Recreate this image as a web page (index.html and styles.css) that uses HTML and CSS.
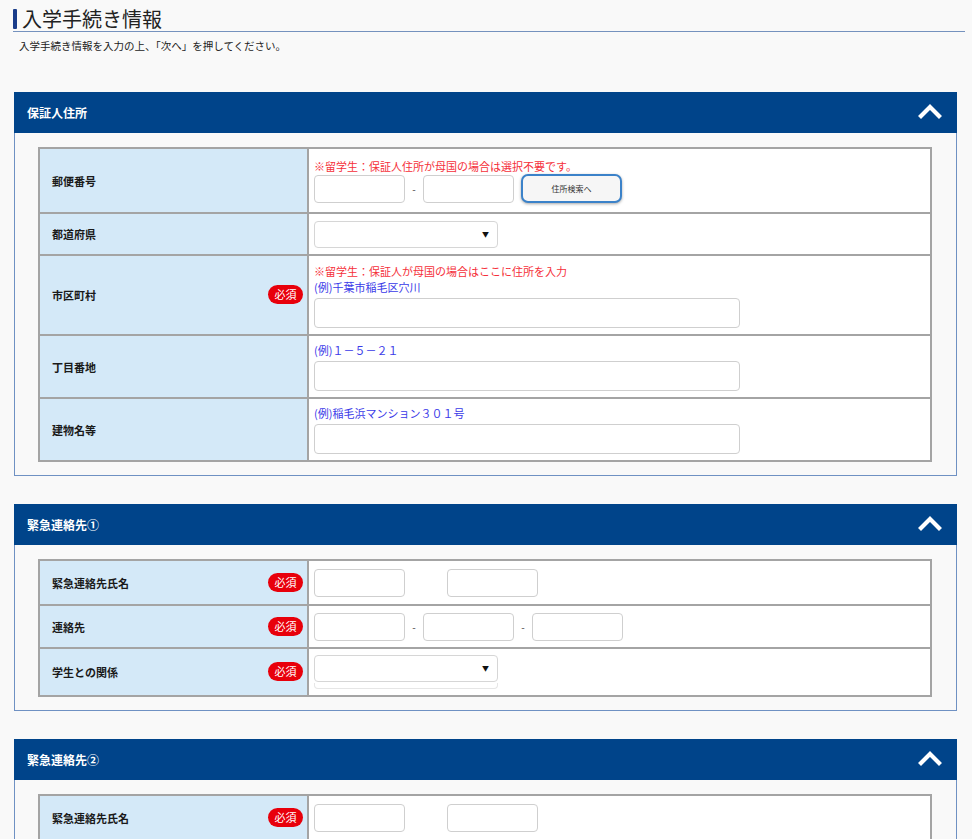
FILE: index.html
```html
<!DOCTYPE html>
<html lang="ja">
<head>
<meta charset="utf-8">
<title>入学手続き情報</title>
<link rel="stylesheet" href="styles.css">
</head>
<body>
<div class="page">
  <h1 class="title"><span class="title-bar"></span>入学手続き情報</h1>
  <p class="lead">入学手続き情報を入力の上、「次へ」を押してください。</p>

  <section class="panel">
    <div class="panel-head">
      <span class="panel-title">保証人住所</span>
      <svg class="chev" width="24" height="16" viewBox="0 0 24 16"><polyline points="3,13 12,4 21,13" fill="none" stroke="#fff" stroke-width="4.2" stroke-linecap="square"/></svg>
    </div>
    <div class="panel-body">
      <table class="form">
        <tr class="h65">
          <th><span class="lbl">郵便番号</span></th>
          <td>
            <div class="note red">※留学生：保証人住所が母国の場合は選択不要です。</div>
            <div class="line">
              <span class="inp w91"></span><span class="dash">-</span><span class="inp w91"></span>
              <span class="btn">住所検索へ</span>
            </div>
          </td>
        </tr>
        <tr class="h42">
          <th><span class="lbl">都道府県</span></th>
          <td><span class="sel"><span class="arrow">▼</span></span></td>
        </tr>
        <tr class="h80">
          <th><span class="lbl">市区町村</span><span class="req">必須</span></th>
          <td>
            <div class="note red">※留学生：保証人が母国の場合はここに住所を入力</div>
            <div class="note blue">(例)千葉市稲毛区穴川</div>
            <span class="inp wide"></span>
          </td>
        </tr>
        <tr class="h63">
          <th><span class="lbl">丁目番地</span></th>
          <td>
            <div class="note blue">(例)１－５－２１</div>
            <span class="inp wide"></span>
          </td>
        </tr>
        <tr class="h63">
          <th><span class="lbl">建物名等</span></th>
          <td>
            <div class="note blue">(例)稲毛浜マンション３０１号</div>
            <span class="inp wide"></span>
          </td>
        </tr>
      </table>
    </div>
  </section>

  <section class="panel">
    <div class="panel-head">
      <span class="panel-title">緊急連絡先①</span>
      <svg class="chev" width="24" height="16" viewBox="0 0 24 16"><polyline points="3,13 12,4 21,13" fill="none" stroke="#fff" stroke-width="4.2" stroke-linecap="square"/></svg>
    </div>
    <div class="panel-body">
      <table class="form">
        <tr class="h45">
          <th><span class="lbl">緊急連絡先氏名</span><span class="req">必須</span></th>
          <td><div class="line"><span class="inp w91 r42"></span><span class="inp w91"></span></div></td>
        </tr>
        <tr class="h43">
          <th><span class="lbl">連絡先</span><span class="req">必須</span></th>
          <td><div class="line"><span class="inp w91"></span><span class="dash">-</span><span class="inp w91"></span><span class="dash">-</span><span class="inp w91"></span></div></td>
        </tr>
        <tr class="h48">
          <th><span class="lbl">学生との関係</span><span class="req">必須</span></th>
          <td class="stack"><span class="sel"><span class="arrow">▼</span></span><span class="ghost"></span></td>
        </tr>
      </table>
    </div>
  </section>

  <section class="panel">
    <div class="panel-head">
      <span class="panel-title">緊急連絡先②</span>
      <svg class="chev" width="24" height="16" viewBox="0 0 24 16"><polyline points="3,13 12,4 21,13" fill="none" stroke="#fff" stroke-width="4.2" stroke-linecap="square"/></svg>
    </div>
    <div class="panel-body">
      <table class="form">
        <tr class="h45">
          <th><span class="lbl">緊急連絡先氏名</span><span class="req">必須</span></th>
          <td><div class="line"><span class="inp w91 r42"></span><span class="inp w91"></span></div></td>
        </tr>
      </table>
    </div>
  </section>
</div>
</body>
</html>
```

FILE: styles.css
```css
* { box-sizing: border-box; }
html, body { margin: 0; padding: 0; }
body {
  background: #f9f9f9;
  font-family: "Noto Sans CJK JP", "Noto Sans", sans-serif;
  color: #222;
  width: 972px;
  height: 839px;
  overflow: hidden;
}
.page { padding: 8px 7px 0 13px; }
.title {
  margin: 0;
  font-size: 20px;
  font-weight: normal;
  line-height: 22px;
  height: 24px;
  color: #222;
  display: flex;
  align-items: center;
  border-bottom: 1.5px solid #7592be;
  padding-bottom: 1px;
}
.title-bar {
  display: inline-block;
  width: 4px;
  height: 20px;
  background: #1a3d8a;
  margin-right: 5px;
  border-radius: 1px;
}
.lead {
  margin: 7px 0 0 6px;
  font-size: 10.5px;
  line-height: 14px;
  color: #222;
}
.panel {
  width: 943px;
  margin: 0 0 28px 1px;
  border: 1px solid #6f91c3;
  background: #f9f9f9;
}
.page .panel:first-of-type { margin-top: 39px; }
.panel-head {
  height: 41px;
  background: #00448a;
  display: flex;
  align-items: center;
  justify-content: space-between;
  padding: 0 15px 0 13px;
  margin: -1px -1px 0 -1px;
}
.panel-title {
  color: #fff;
  font-weight: bold;
  font-size: 12px;
}
.chev { display: block; margin-top: -4px; }
.panel-body { padding: 14px 24px 13px 23px; }
.form {
  width: 894px;
  border-collapse: collapse;
  border: 2px solid #a4a4a4;
}
.form th, .form td {
  border: 2px solid #a4a4a4;
  padding: 0;
}
.form th {
  width: 269px;
  background: #d4e9f8;
  text-align: left;
  font-weight: bold;
  font-size: 11px;
  padding: 0 5px 0 12px;
  vertical-align: middle;
  position: relative;
  color: #1a1a1a;
}
.req {
  position: absolute;
  right: 4px;
  top: 50%;
  margin-top: -10px;
  width: 35px;
  height: 19px;
  border-radius: 10px;
  background: #e8000b;
  color: #fff;
  font-size: 11px;
  font-weight: normal;
  line-height: 19px;
  text-align: center;
}
.form td {
  background: #fff;
  padding: 6px 6px 6px 5px;
  vertical-align: middle;
}
.h65 { height: 65px; }
.h42 { height: 42px; }
.h80 { height: 80px; }
.h63 { height: 63px; }
.h45 { height: 45px; }
.h43 { height: 43px; }
.h48 { height: 48px; }
.note {
  font-size: 11px;
  line-height: 16px;
}
.red { color: #f5303a; }
.blue { color: #3a3ae8; }
.line { display: flex; align-items: center; }
.inp {
  display: inline-block;
  height: 28px;
  border: 1px solid #cfcfcf;
  border-radius: 4px;
  background: #fff;
}
.w91 { width: 91px; }
.r42 { margin-right: 42px; }
.wide { display: block; width: 426px; height: 30px; margin-top: 3px; }
.dash {
  width: 18px;
  text-align: center;
  font-size: 10px;
  color: #444;
}
.btn {
  margin-left: 7px;
  width: 101px;
  height: 29px;
  border: 2px solid #3b82c9;
  border-radius: 7px;
  background: #f6f6f6;
  box-shadow: 0 1px 3px rgba(0,0,0,0.35);
  font-size: 8px;
  color: #333;
  display: flex;
  align-items: center;
  justify-content: center;
}
.sel {
  position: relative;
  display: block;
  width: 184px;
  height: 27px;
  border: 1px solid #d6d6d6;
  border-radius: 4px;
  background: #fff;
}
.arrow {
  position: absolute;
  right: 8px;
  top: 7px;
  font-size: 7px;
  color: #111;
}
.stack { vertical-align: top; padding-top: 7px; }
.ghost {
  display: block;
  width: 184px;
  height: 6px;
  margin-top: 1px;
  border: 1px solid #e6e6e6;
  border-top: none;
  border-radius: 0 0 4px 4px;
}
```
